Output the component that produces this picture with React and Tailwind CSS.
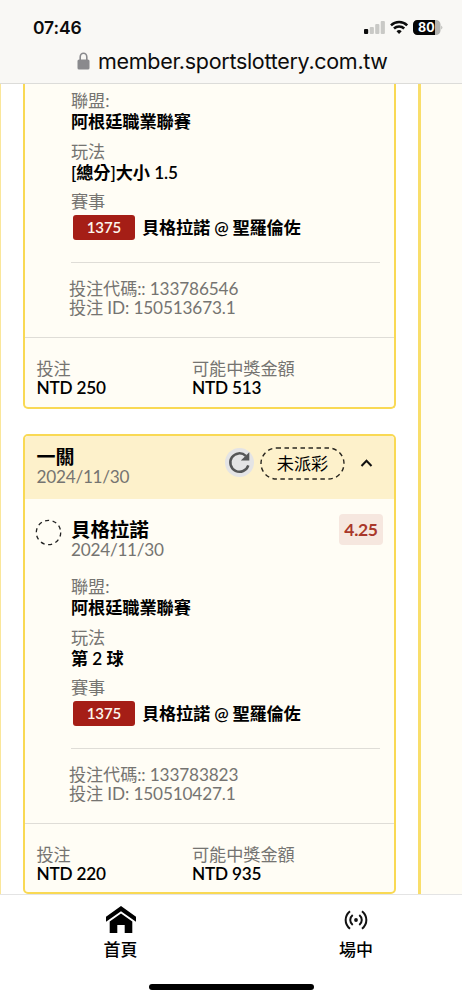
const line = "block whitespace-nowrap leading-[21px]";

function StatusBar() {
  return (
    <header className="flex h-[84px] shrink-0 flex-col border-b border-[#dcdcd9] bg-[#f9f8f5] font-['Inter','Liberation_Sans',sans-serif] text-[#0c0c0c]">
      <div className="flex h-[46px] items-start justify-between pl-[33px] pr-[19px] pt-[18px]">
        <span className="text-[17.5px] font-semibold leading-5 tracking-[-0.1px]">07:46</span>
        <svg width="79" height="18" viewBox="0 0 79 18">
          <rect x="0" y="11" width="4.2" height="5" rx="1" fill="#0c0c0c" />
          <rect x="5.7" y="9" width="4.2" height="7" rx="1" fill="#c9c9c6" />
          <rect x="11.2" y="6" width="4.2" height="10" rx="1" fill="#c9c9c6" />
          <rect x="16.7" y="3" width="4.2" height="13" rx="1" fill="#c9c9c6" />
          <g fill="none" stroke="#0c0c0c" strokeWidth="2.500">
            <path d="M27 7.300a11.500 11.500 0 0 1 16.200 0" />
            <path d="M30 10.500a7.200 7.200 0 0 1 10.200 0" />
          </g>
          <path d="M35.100 16l-2.600-2.800a3.800 3.800 0 0 1 5.200 0z" fill="#0c0c0c" />
          <path d="M53.500 2h18.500a4.500 4.500 0 0 1 4.500 4.500v6a4.500 4.500 0 0 1-4.500 4.500h-18.500a4.500 4.500 0 0 1-4.500-4.500v-6a4.500 4.500 0 0 1 4.500-4.500z" fill="#b3b3b0" />
          <path d="M53.500 2h17.500v15h-17.500a4.500 4.500 0 0 1-4.500-4.500v-6a4.500 4.500 0 0 1 4.500-4.500z" fill="#050505" />
          <path d="M77.300 7.500a2.500 2.500 0 0 1 0 4z" fill="#b3b3b0" />
          <text x="62.300" y="14" textAnchor="middle" fontSize="12.500" fontWeight="700" fill="#fff">80</text>
        </svg>
      </div>
      <div className="flex items-center pl-[77px]">
        <svg width="13" height="18" viewBox="0 0 13 18">
          <path d="M3.200 8.500V5a3.300 3.800 0 0 1 6.600 0v3.500" fill="none" stroke="#8a8a8d" strokeWidth="1.600" />
          <rect x="0.500" y="7.500" width="12" height="10" rx="1.600" fill="#8a8a8d" />
        </svg>
        <span className="ml-2 whitespace-nowrap text-[21.500px] leading-[30px] tracking-[-0.300px]">member.sportslottery.com.tw</span>
      </div>
    </header>
  );
}

function Field({ label, value }) {
  return (
    <div className="mb-[8.500px]">
      <span className={`${line} text-[#757471]`}>{label}</span>
      <span className={`${line} font-semibold text-black`}>{value}</span>
    </div>
  );
}

function BetDetails({ play, code, id, stake, payout }) {
  return (
    <>
      <div className="h-[247px] pl-[46px] pr-[14px]">
        <Field label="聯盟:" value="阿根廷職業聯賽" />
        <Field label="玩法" value={play} />
        <span className={`${line} text-[#757471]`}>賽事</span>
        <div className="ml-[2px] mt-[3px] flex h-[25px] items-center">
          <span className="flex h-[25px] w-[62px] items-center justify-center rounded-[3px] bg-[#a51e16] text-[15px] font-semibold text-[#fdf6ee]">1375</span>
          <span className="ml-[7px] mt-px whitespace-nowrap font-semibold tracking-[-0.180px] text-black">貝格拉諾 @ 聖羅倫佐</span>
        </div>
        <div className="mt-[22px] border-t border-[#dfddd7]" />
        <div className="-ml-[2px] mt-[17px] tracking-[-0.140px] text-[#757471]">
          <span className="block whitespace-nowrap leading-[18.500px]">投注代碼:: {code}</span>
          <span className="block whitespace-nowrap leading-[18.500px]">投注 ID: {id}</span>
        </div>
      </div>
      <div className="flex h-[70px] border-t border-[#dfddd7] pl-[11.500px] pt-[22px]">
        <div className="w-[155.500px] leading-[18.500px]">
          <div className="text-[#757471]">投注</div>
          <div className="font-semibold tracking-[-0.200px] text-black">NTD {stake}</div>
        </div>
        <div className="leading-[18.500px]">
          <div className="text-[#757471]">可能中獎金額</div>
          <div className="font-semibold tracking-[-0.200px] text-black">NTD {payout}</div>
        </div>
      </div>
    </>
  );
}

function TicketHeader() {
  return (
    <div className="flex h-[63px] bg-[#fdf1cb] pl-[11.500px]">
      <div className="w-[187.500px] pt-[10px]">
        <div className="text-[19px] font-semibold leading-[21px] text-black">一關</div>
        <div className="leading-[20px] tracking-[-0.250px] text-[#757471]">2024/11/30</div>
      </div>
      <svg className="mt-[12px] shrink-0" width="30" height="30" viewBox="0 0 30 30">
        <circle cx="15.500" cy="14.500" r="14.500" fill="#e4e4e5" />
        <path d="M24.300 17.300A9.200 9.200 0 1 1 21.800 7.800" fill="none" stroke="#555657" strokeWidth="2.500" />
        <path d="M25.300 4.300v8.200h-8.500z" fill="#555657" />
      </svg>
      <div className="relative ml-[6px] mt-[11px] flex h-[33px] w-[85px] shrink-0 items-center justify-center pt-px text-black">
        <svg className="absolute inset-0" width="85" height="33" viewBox="0 0 85 33">
          <rect x="1" y="1" width="83" height="31" rx="15.500" fill="none" stroke="#292720" strokeWidth="1.400" strokeDasharray="4.500 3.500" />
        </svg>
        未派彩
      </div>
      <svg className="ml-[15px] mt-[22px] shrink-0" width="13" height="10" viewBox="0 0 13 10">
        <path d="M1.500 8l5-5.300 5 5.300" fill="none" stroke="#111" strokeWidth="2" />
      </svg>
    </div>
  );
}

function Selection() {
  return (
    <div className="flex h-[77px] pl-[10px] pr-[11px] pt-[16px]">
      <svg className="mt-[4px] shrink-0" width="27" height="27" viewBox="0 0 27 27">
        <circle cx="13.500" cy="13.500" r="12.200" fill="none" stroke="#222" strokeWidth="1.300" strokeDasharray="4.100 3.566" />
      </svg>
      <div className="ml-[9px] pt-[4px]">
        <div className="text-[19.500px] font-semibold leading-[21px] text-black">貝格拉諾</div>
        <div className="leading-[20px] tracking-[-0.250px] text-[#757471]">2024/11/30</div>
      </div>
      <span className="-mt-px ml-auto flex h-[31px] w-[44px] items-center justify-center rounded-[4px] bg-[#f6e7df] pt-[2px] text-[17.500px] font-bold tracking-[-0.300px] text-[#a9372a]">4.25</span>
    </div>
  );
}

function Tickets() {
  return (
    <main className="flex h-[810px] overflow-hidden border-l border-[#fae69a] bg-white text-[17.200px] tracking-[-0.080px] font-['Lato','Noto_Sans_CJK_TC',sans-serif]">
      <div className="ml-[22px] flex w-[373px] flex-col">
        <section className="h-[325px] shrink-0 overflow-hidden rounded-b-[5px] border-2 border-t-0 border-[#f9d954] bg-[#fffdf5] pt-[6px]">
          <BetDetails play="[總分]大小 1.5" code="133786546" id="150513673.1" stake="250" payout="513" />
        </section>
        <section className="mt-[25px] h-[460px] shrink-0 overflow-hidden rounded-[5px] border-2 border-[#f9d954] bg-[#fffdf5]">
          <TicketHeader />
          <Selection />
          <BetDetails play="第 2 球" code="133783823" id="150510427.1" stake="220" payout="935" />
        </section>
      </div>
      <div className="ml-[22px] flex-1 border-l-[3px] border-[#f9de6b] bg-[#fffdf5]" />
    </main>
  );
}

function BottomNav() {
  return (
    <nav className="flex h-[106px] shrink-0 flex-col border-t border-[#e4e4e4] bg-white text-[17px] font-medium text-black font-['Lato','Noto_Sans_CJK_TC',sans-serif]">
      <div className="flex h-[89px] pl-[3px]">
        <div className="flex w-[235px] shrink-0 flex-col items-center pt-[11px]">
          <svg width="30" height="27" viewBox="0 0 30 27">
            <path d="M15 0l15 10.800v5L15 5.200 0 15.800v-5z" />
            <path d="M15 7.400l11.300 8.200V27H18.700v-8h-7.400v8H3.700V15.600z" />
          </svg>
          <span className="mt-[5px] leading-6">首頁</span>
        </div>
        <div className="flex w-[236px] shrink-0 flex-col items-center pt-[15px]">
          <svg width="24" height="20" viewBox="0 0 24 20" fill="none" stroke="#111" strokeWidth="2">
            <path d="M6 1.200C.200 6 .200 14 6 18.800M18 1.200c5.800 4.800 5.800 12.800 0 17.600M8.700 5c-3.300 2.700-3.300 7.300 0 10M15.300 5c3.300 2.700 3.300 7.300 0 10" />
            <circle cx="12" cy="10" r="1.900" fill="#111" stroke="none" />
          </svg>
          <span className="mt-[8px] leading-6">場中</span>
        </div>
      </div>
      <div className="mx-auto h-[6px] w-[165px] rounded-full bg-black" />
    </nav>
  );
}

export default function App() {
  return (
    <div className="flex h-[1000px] w-[462px] flex-col overflow-hidden bg-white">
      <StatusBar />
      <Tickets />
      <BottomNav />
    </div>
  );
}
